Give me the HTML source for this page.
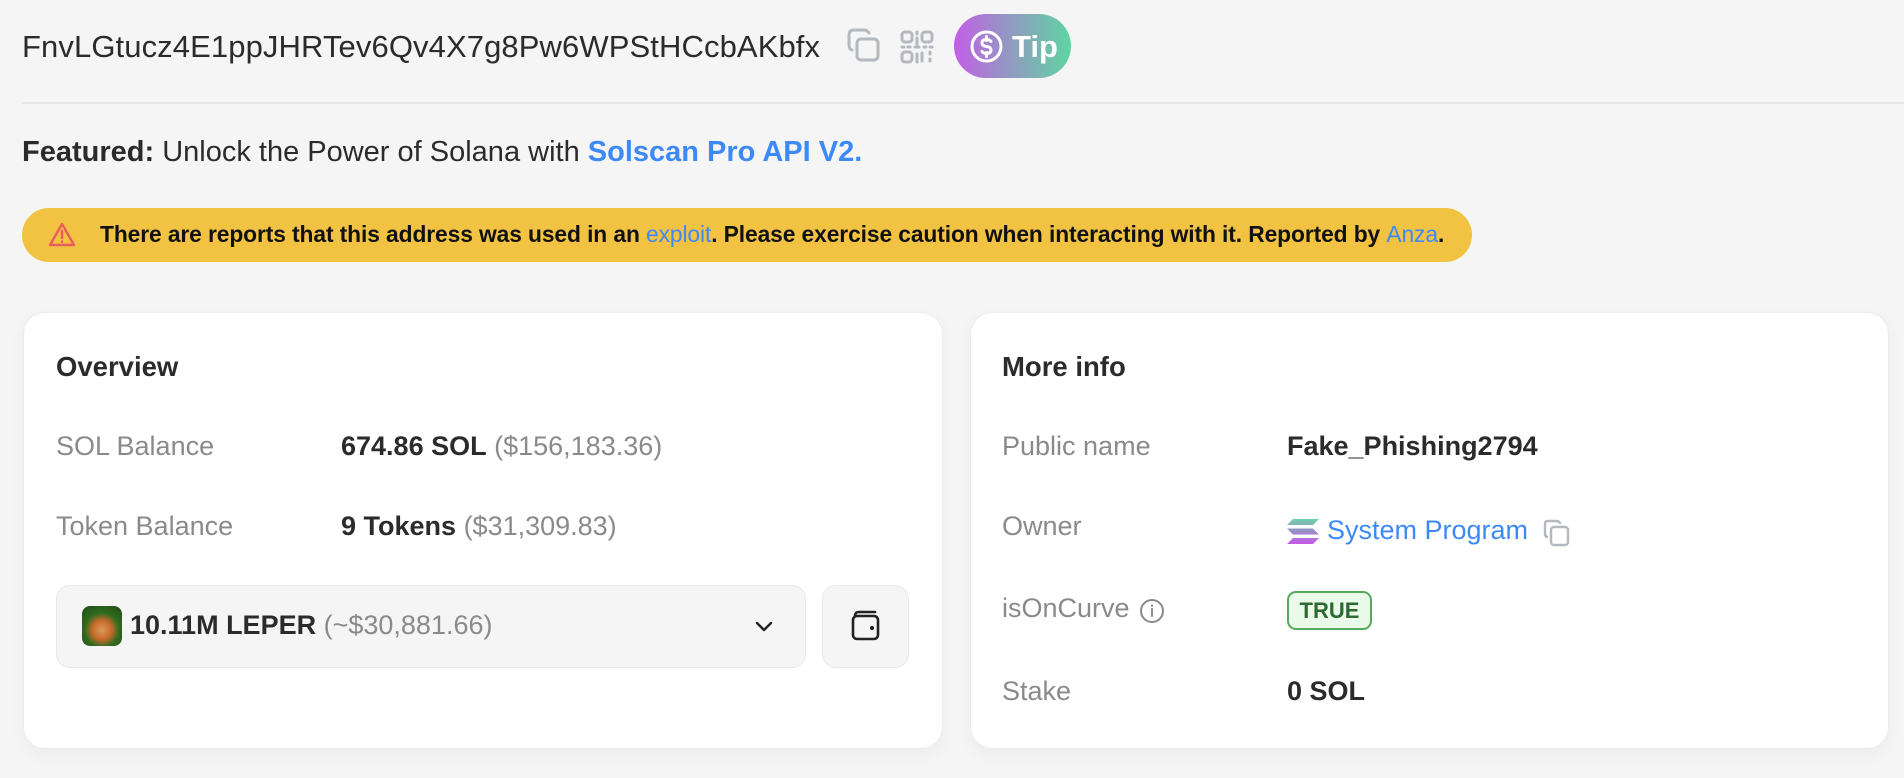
<!DOCTYPE html>
<html><head><meta charset="utf-8"><style>
*{margin:0;padding:0;box-sizing:border-box}
body{width:1904px;height:778px;background:#f5f5f5;font-family:"Liberation Sans",Arial,sans-serif;position:relative;overflow:hidden;color:#2b2b2b}
.a{position:absolute;white-space:nowrap}
.card{position:absolute;background:#fff;border:1px solid #ececef;border-radius:22px;box-shadow:0 6px 16px rgba(0,0,0,0.04)}
.lbl{position:absolute;font-size:27px;color:#8a8a8a;white-space:nowrap}
.val{position:absolute;font-size:27px;color:#2b2b2b;white-space:nowrap}
.g{color:#8a8a8a;font-weight:normal}
.blue{color:#3d8af7}
</style></head><body>
<div class="a" style="left:22px;top:29px;font-size:31px;color:#2b2b2b;letter-spacing:0.1px">FnvLGtucz4E1ppJHRTev6Qv4X7g8Pw6WPStHCcbAKbfx</div>
<svg class="a" style="left:847px;top:28px" width="34" height="34" viewBox="0 0 34 34" fill="none" stroke="#b4b8bf" stroke-width="3" stroke-linecap="round"><rect x="10" y="11" width="21" height="21" rx="4"/><path d="M22 5 Q20 2 17 2 H7 Q2 2 2 7 V17 Q2 21 5 22"/></svg>
<svg class="a" style="left:900px;top:30px" width="35" height="34" viewBox="0 0 35 34" fill="none" stroke="#b4b8bf" stroke-width="3"><rect x="2" y="2" width="10" height="10" rx="3"/><rect x="22" y="2" width="10" height="10" rx="3"/><rect x="2" y="22" width="10" height="10" rx="3"/><path d="M17 2v2M17 8v6M2 17h2M8 17h2M15 17h4M24 17h2M30 17h2M22 23v8M30 22v2M30 29v2M17 24v8" stroke-linecap="round"/></svg>
<div class="a" style="left:954px;top:14px;width:117px;height:64px;border-radius:32px;background:linear-gradient(90deg,#c35ee6,#8f9dc0,#5fd4a0)"></div>
<svg class="a" style="left:970px;top:30px" width="33" height="33" viewBox="0 0 33 33" fill="none" stroke="#fff" stroke-width="3"><circle cx="16.5" cy="16.5" r="14.5"/><path d="M21 11.5 Q19.5 9.5 16.5 9.5 Q12 9.5 12 13 Q12 16 16.5 16.5 Q21 17 21 20 Q21 23.5 16.5 23.5 Q13.5 23.5 12 21.5 M16.5 6.5v4M16.5 22.5v4" stroke-linecap="round"/></svg>
<div class="a" style="left:1012px;top:29px;font-size:31px;font-weight:bold;color:#fff">Tip</div>
<div class="a" style="left:22px;top:102px;width:1882px;height:2px;background:#e6e6e6"></div>
<div class="a" style="left:22px;top:136px;font-size:29px;color:#2b2b2b"><b>Featured:</b> Unlock the Power of Solana with <b class="blue">Solscan Pro API V2.</b></div>
<div class="a" style="left:22px;top:208px;width:1450px;height:54px;border-radius:27px;background:#f2c243"></div>
<svg class="a" style="left:48px;top:222px" width="28" height="26" viewBox="0 0 28 26" fill="none" stroke="#ec5c5c" stroke-width="2.4" stroke-linejoin="round" stroke-linecap="round"><path d="M14 2 L26 23 H2 Z"/><path d="M14 9v7M14 19.5v.5"/></svg>
<div class="a" style="left:100px;top:221px;font-size:22.8px;font-weight:bold;color:#111;letter-spacing:-0.1px">There are reports that this address was used in an <span class="blue" style="font-weight:normal">exploit</span>. Please exercise caution when interacting with it. Reported by <span class="blue" style="font-weight:normal">Anza</span>.</div>

<div class="card" style="left:23px;top:312px;width:920px;height:437px"></div>
<div class="a" style="left:56px;top:351px;font-size:27.5px;font-weight:bold;color:#2b2b2b">Overview</div>
<div class="lbl" style="left:56px;top:431px">SOL Balance</div>
<div class="val" style="left:341px;top:431px"><b>674.86 SOL</b> <span class="g">($156,183.36)</span></div>
<div class="lbl" style="left:56px;top:511px">Token Balance</div>
<div class="val" style="left:341px;top:511px"><b>9 Tokens</b> <span class="g">($31,309.83)</span></div>
<div class="a" style="left:56px;top:585px;width:750px;height:83px;border:1px solid #e8e8ec;border-radius:14px;background:#f5f5f5"></div>
<div class="a" style="left:82px;top:606px;width:40px;height:40px;border-radius:8px;background:radial-gradient(circle at 50% 60%,#d99a5a 0,#c96a2a 30%,#2f6b1f 55%,#1f4a16 100%)"></div>
<div class="val" style="left:130px;top:610px"><b>10.11M LEPER</b> <span class="g">(~$30,881.66)</span></div>
<svg class="a" style="left:754px;top:619px" width="20" height="14" viewBox="0 0 20 14" fill="none" stroke="#222" stroke-width="2.4" stroke-linecap="round" stroke-linejoin="round"><path d="M3 4 L10 11 L17 4"/></svg>
<div class="a" style="left:822px;top:585px;width:87px;height:83px;border:1px solid #e8e8ec;border-radius:14px;background:#f5f5f5"></div>
<svg class="a" style="left:850px;top:610px" width="30" height="32" viewBox="0 0 30 32" fill="none" stroke="#222" stroke-width="2.6" stroke-linecap="round"><path d="M5 6 Q5 2 9 2 H25"/><rect x="3" y="6" width="25" height="23" rx="4"/><circle cx="22" cy="18" r="0.8" fill="#222"/></svg>

<div class="card" style="left:970px;top:312px;width:919px;height:437px"></div>
<div class="a" style="left:1002px;top:351px;font-size:27.5px;font-weight:bold;color:#2b2b2b">More info</div>
<div class="lbl" style="left:1002px;top:431px">Public name</div>
<div class="val" style="left:1287px;top:431px;font-weight:bold">Fake_Phishing2794</div>
<div class="lbl" style="left:1002px;top:511px">Owner</div>
<svg class="a" style="left:1287px;top:519px" width="32" height="25" viewBox="0 0 32 25"><defs><linearGradient id="s" x1="0" y1="0" x2="0" y2="1"><stop offset="0" stop-color="#6fd3a8"/><stop offset=".5" stop-color="#9a8ac8"/><stop offset="1" stop-color="#c85ae8"/></linearGradient></defs><path d="M6 0H32L26 6H0Z M0 9.5H26L32 15.5H6Z M6 19H32L26 25H0Z" fill="url(#s)"/></svg>
<div class="val blue" style="left:1327px;top:515px">System Program</div>
<svg class="a" style="left:1543px;top:519px" width="28" height="28" viewBox="0 0 28 28" fill="none" stroke="#b4b8bf" stroke-width="2.4" stroke-linecap="round"><rect x="8" y="8" width="17" height="18" rx="3"/><path d="M17 4 Q16 2 13 2 H5 Q2 2 2 5 V15 Q2 17 4 18"/></svg>
<div class="lbl" style="left:1002px;top:593px">isOnCurve</div>
<svg class="a" style="left:1139px;top:598px" width="26" height="26" viewBox="0 0 26 26" fill="none" stroke="#8a8a8a" stroke-width="2"><circle cx="13" cy="13" r="11"/><path d="M13 11v7M13 7.5v.5" stroke-linecap="round"/></svg>
<div class="a" style="left:1287px;top:591px;width:85px;height:39px;border:2px solid #58a85e;border-radius:9px;background:#eafbe9;color:#2c6a32;font-size:22px;font-weight:bold;text-align:center;line-height:35px">TRUE</div>
<div class="lbl" style="left:1002px;top:676px">Stake</div>
<div class="val" style="left:1287px;top:676px;font-weight:bold">0 SOL</div>
</body></html>
